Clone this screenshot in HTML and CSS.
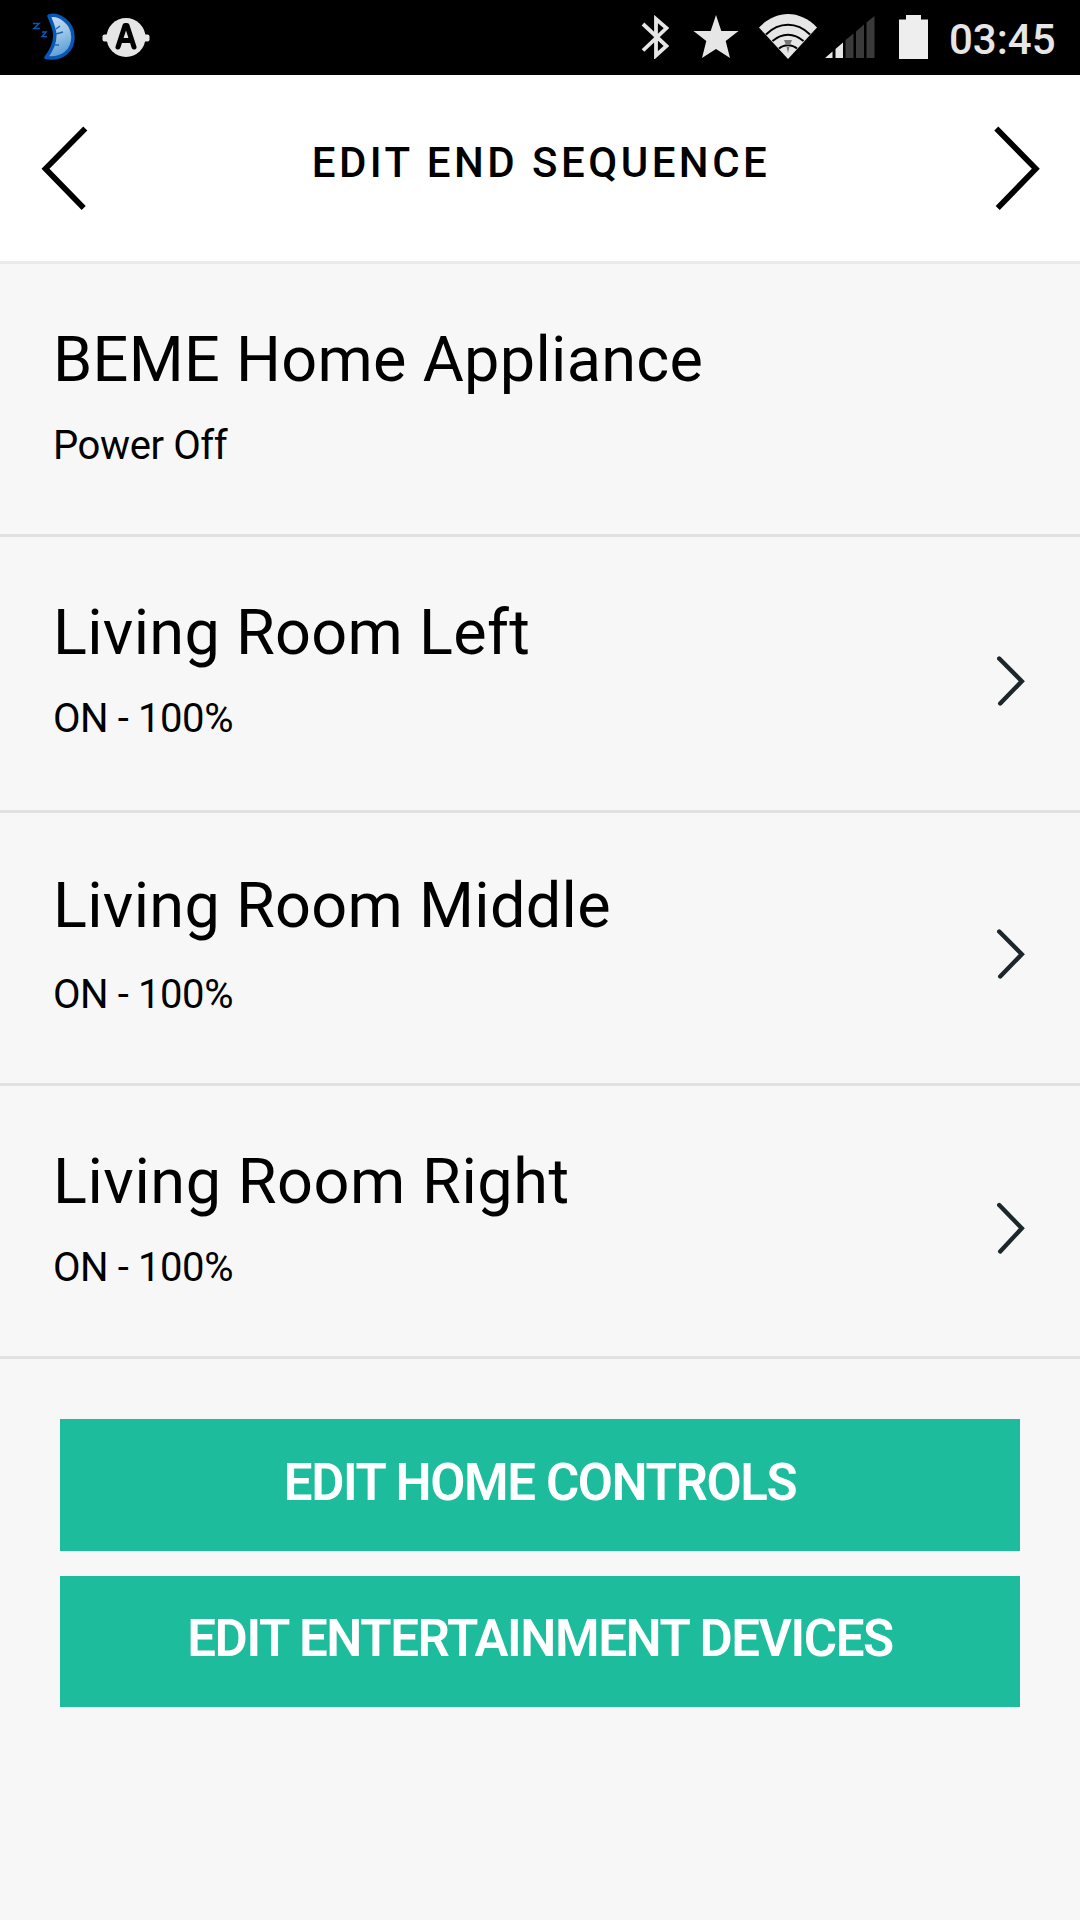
FILE: index.html
```html
<!DOCTYPE html>
<html lang="en">
<head>
    <meta charset="UTF-8">
    <meta name="viewport" content="width=device-width, initial-scale=1.0">
    <title>Edit End Sequence</title>
    <link rel="stylesheet" href="styles.css">
</head>
<body>
    <!-- Status bar -->
    <div class="status-bar">
        <svg class="icon-moon" width="44" height="50" viewBox="0 0 44 50">
            <defs>
                <linearGradient id="moon" x1="0" y1="0" x2="0.3" y2="1">
                    <stop offset="0" stop-color="#c9dff1"/>
                    <stop offset="0.5" stop-color="#a3c9e8"/>
                    <stop offset="1" stop-color="#5c9fd6"/>
                </linearGradient>
            </defs>
            <path d="M17 4C26 1 41 10 41 25C41 38 31 48 14 45.500C20 38 24 30 22.500 20C21.500 14 19 9 17 4Z" fill="url(#moon)" stroke="#0957b5" stroke-width="3.500" stroke-linejoin="round"/>
            <path d="M24 17L28 14M24 22L31 20M23 33H27" fill="none" stroke="#1c66b8" stroke-width="1.500"/>
            <path d="M1 11.500H7L2 16.500H8M10 20H14L10 24.500H15" fill="none" stroke="#0957b5" stroke-width="1.500"/>
        </svg>
        <svg class="icon-app" width="48" height="40" viewBox="0 0 48 40">
            <circle cx="24" cy="19.500" r="19.500" fill="#e6e6e6"/>
            <rect x="0.500" y="16.500" width="47" height="7" rx="2" fill="#e6e6e6"/>
            <path d="M16 29L23 7.500H25L32 29M18.500 22.500H29.500" fill="none" stroke="#000" stroke-width="5" stroke-linecap="round" stroke-linejoin="round"/>
        </svg>
        <svg class="icon-bluetooth" width="28" height="44" viewBox="0 0 28 44">
            <path d="M2 9L25.500 31L15 40.500V4L25.500 13L2 35.500" fill="none" stroke="#e6e6e6" stroke-width="3.800"/>
        </svg>
        <svg class="icon-star" width="46" height="44" viewBox="0 0 46 44">
            <path d="M23 0L28.300 16H45.500L32.700 26L37 43L23 34L9 43L13.300 26L0.500 16H17.700Z" fill="#e6e6e6"/>
        </svg>
        <svg class="icon-wifi" width="58" height="45" viewBox="0 0 58 45">
            <path d="M0 13.500C17 -4.500 41 -4.500 58 13.500L29 45Z" fill="#e6e6e6"/>
            <path d="M7 20.500C20 7.500 38 7.500 51 20.500M13.500 27C23 18.500 35 18.500 44.500 27M20 34.500C25 30 33 30 38 34.500" fill="none" stroke="#000" stroke-width="2"/>
            <path d="M25 26H33L31 31H27ZM27.500 33H30.500L29 39Z" fill="#777"/>
        </svg>
        <svg class="icon-signal" width="50" height="42" viewBox="0 0 50 42">
            <path d="M0 42L7.500 35.500V42ZM10.500 33L18 26.500V42H10.500Z" fill="#e6e6e6"/>
            <path d="M20.500 24L28.500 17.500V42H20.500ZM31 15.500L39 8.500V42H31ZM41.500 6.500L49.500 0V42H41.500Z" fill="#3a3a3a"/>
        </svg>
        <svg class="icon-battery" width="29" height="44" viewBox="0 0 29 44">
            <path d="M7 0H22V4.500H29V44H0V4.500H7Z" fill="#eee"/>
        </svg>
        <span class="clock">03:45</span>
    </div>

    <!-- Header -->
    <div class="header">
        <svg width="48" height="88" viewBox="0 0 48 88">
            <path d="M45.300 4.500L5.500 44.800L43.700 84" fill="none" stroke="#000" stroke-width="5.700"/>
        </svg>
        <h1>EDIT END SEQUENCE</h1>
        <svg width="48" height="88" viewBox="0 0 48 88">
            <path d="M2.300 4.500L41.800 44.800L3.700 84" fill="none" stroke="#000" stroke-width="5.700"/>
        </svg>
    </div>

    <!-- Device list -->
    <div class="list">
        <div class="row">
            <div class="row-text">
                <h2>BEME Home Appliance</h2>
                <p>Power Off</p>
            </div>
        </div>
        <div class="row tall">
            <div class="row-text">
                <h2>Living Room Left</h2>
                <p>ON - 100%</p>
            </div>
            <svg class="chevron" width="30" height="52" viewBox="0 0 30 52">
                <path d="M2.200 3.500L24.800 26.300L3.200 48.500" fill="none" stroke="#1c272b" stroke-width="4.400" stroke-linecap="round"/>
            </svg>
        </div>
        <div class="row loose">
            <div class="row-text">
                <h2>Living Room Middle</h2>
                <p>ON - 100%</p>
            </div>
            <svg class="chevron" width="30" height="52" viewBox="0 0 30 52">
                <path d="M2.200 3.500L24.800 26.300L3.200 48.500" fill="none" stroke="#1c272b" stroke-width="4.400" stroke-linecap="round"/>
            </svg>
        </div>
        <div class="row last">
            <div class="row-text">
                <h2>Living Room Right</h2>
                <p>ON - 100%</p>
            </div>
            <svg class="chevron" width="30" height="52" viewBox="0 0 30 52">
                <path d="M2.200 3L24.800 26.300L3.200 49.500" fill="none" stroke="#1c272b" stroke-width="4.400" stroke-linecap="round"/>
            </svg>
        </div>
    </div>

    <!-- Actions -->
    <div class="actions">
        <button class="home">EDIT HOME CONTROLS</button>
        <button>EDIT ENTERTAINMENT DEVICES</button>
    </div>
</body>
</html>
```
FILE: styles.css
```css
* {
    box-sizing: border-box;
}

body {
    font-family: Roboto, sans-serif;
    margin: 0;
    min-height: 1920px;
    background-color: #f7f7f7;
    color: #000;
}

svg {
    display: block;
    flex: none;
}

.status-bar {
    display: flex;
    align-items: flex-start;
    height: 75px;
    padding-left: 32px;
    background-color: #000;
}

.icon-moon {
    margin-top: 12px;
}

.icon-app {
    margin: 18px 0 0 26px;
}

.icon-bluetooth {
    margin: 15px 0 0 491px;
}

.icon-star {
    margin: 15px 0 0 24px;
}

.icon-wifi {
    margin: 14px 0 0 20px;
}

.icon-signal {
    margin: 16px 0 0 8px;
}

.icon-battery {
    margin: 15px 0 0 24px;
}

.clock {
    margin: 15px 0 0 21px;
    font-size: 42px;
    font-weight: 500;
    line-height: 49px;
    color: #e6e6e6;
}

.header {
    display: flex;
    justify-content: space-between;
    height: 189px;
    padding: 49px 38px 0 40px;
    background-color: #fff;
    border-bottom: 3px solid #ebebeb;
}

.header h1 {
    margin: 14px 0 0;
    font-size: 42px;
    line-height: 49px;
    font-weight: 500;
    letter-spacing: 3.5px;
}

.row {
    display: flex;
    justify-content: space-between;
    height: 273px;
    padding: 56px 53px 0;
    border-bottom: 3px solid #e1e1e1;
}

.row.tall {
    height: 276px;
}

.row.loose {
    padding-top: 53px;
}

.row h2 {
    margin: 0;
    font-size: 63px;
    line-height: 79px;
    font-weight: 400;
    letter-spacing: 0.3px;
}

.row p {
    margin: 22px 0 0;
    font-size: 40px;
    line-height: 49px;
    letter-spacing: -0.4px;
}

.row.loose p {
    margin-top: 25px;
}

.row.last h2 {
    letter-spacing: 0.55px;
}

.chevron {
    margin-top: 62px;
}

.row.last .chevron {
    margin-top: 60px;
}

.actions {
    display: flex;
    flex-direction: column;
    gap: 25px;
    padding: 60px 60px 0;
}

.actions button {
    height: 131px;
    padding: 0 0 6px;
    border: none;
    background-color: #1cbc9c;
    color: #fff;
    font-family: inherit;
    font-size: 51px;
    font-weight: 600;
    letter-spacing: -1.4px;
}

.actions .home {
    height: 132px;
    padding-bottom: 5px;
}
```
